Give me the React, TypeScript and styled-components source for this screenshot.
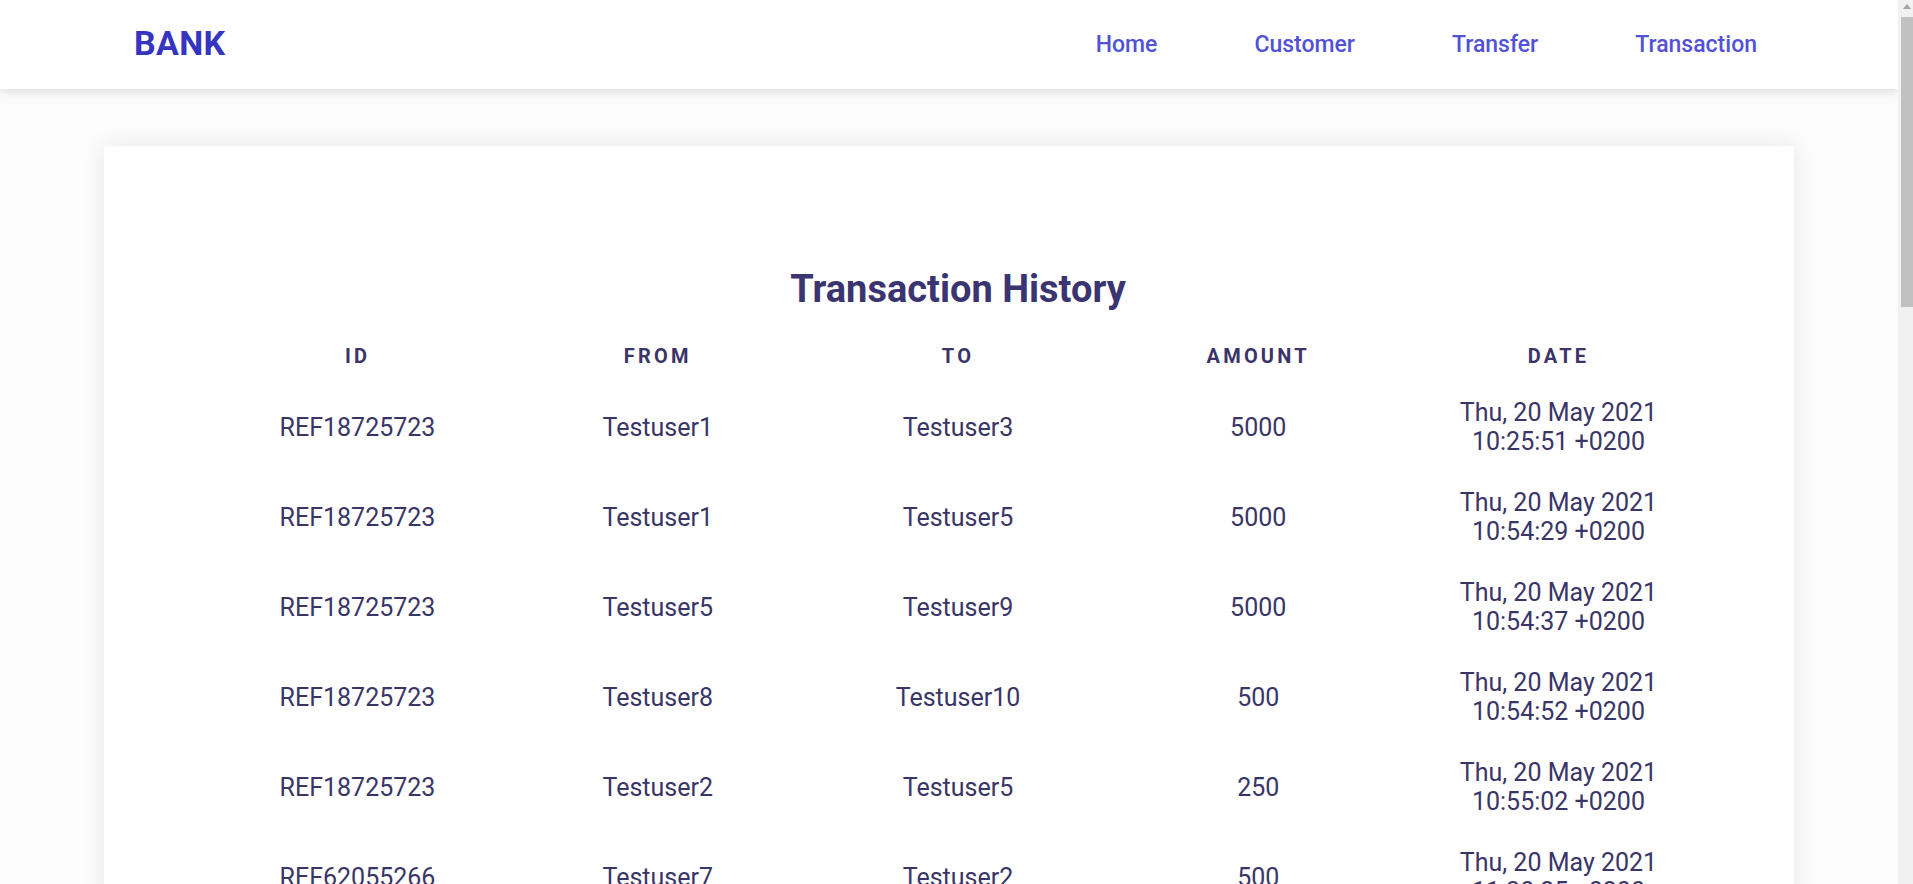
import React from "react";
import styled, { createGlobalStyle } from "styled-components";

const GlobalStyle = createGlobalStyle`
  html, body {
    margin: 0;
    padding: 0;
    background: #fcfcfc;
    font-family: Roboto, "Liberation Sans", Arial, sans-serif;
  }
  * { box-sizing: border-box; }
`;

const Page = styled.div`
  margin-right: 15px;
`;

const ScrollTrack = styled.div`
  position: fixed;
  top: 0;
  right: 0;
  width: 15px;
  height: 100vh;
  background: #f1f1f1;
  display: flex;
  flex-direction: column;
  align-items: flex-end;
  z-index: 10;
`;

const ScrollArrow = styled.div`
  height: 17px;
  width: 100%;
  display: flex;
  justify-content: center;
  padding-top: 4px;
  padding-left: 3px;
`;

const ScrollThumb = styled.div`
  width: 12px;
  height: 290px;
  background: #c1c1c1;
`;

const Header = styled.header`
  height: 89px;
  background: #ffffff;
  display: flex;
  align-items: center;
  justify-content: space-between;
  padding: 0 141px 0 134px;
  box-shadow: 0 3px 10px rgba(0, 0, 0, 0.13);
  position: relative;
  z-index: 2;
`;

const Logo = styled.div`
  font-size: 34px;
  font-weight: 700;
  color: #3535bf;
  letter-spacing: 0.3px;
  margin-top: -3px;
`;

const Nav = styled.nav`
  display: flex;
  align-items: center;
  gap: 97px;
`;

const NavLink = styled.a`
  font-size: 23px;
  font-weight: 500;
  color: #5252d6;
  text-decoration: none;
  cursor: pointer;
`;

const Card = styled.main`
  width: 89%;
  margin: 57px auto 70px;
  background: #ffffff;
  box-shadow: 0 0 22px rgba(0, 0, 0, 0.09);
  padding: 121px 85px 80px 103px;
`;

const Title = styled.h2`
  margin: 0 0 18px;
  font-size: 38px;
  line-height: 45px;
  font-weight: 700;
  color: #3a3470;
  text-align: center;
`;

const Table = styled.table`
  width: 100%;
  border-collapse: collapse;
  table-layout: fixed;
`;

const Th = styled.th`
  font-size: 20px;
  font-weight: 700;
  letter-spacing: 3.2px;
  text-transform: uppercase;
  line-height: 24px;
  padding: 14px 16px;
  color: #3a3468;
  text-align: center;
`;

const Td = styled.td`
  font-size: 25px;
  font-weight: 400;
  line-height: 29px;
  padding: 16px 12px;
  color: #3a3567;
  text-align: center;
  vertical-align: middle;
`;

const DateLine = styled.span`
  display: block;
`;

type Tx = { id: string; from: string; to: string; amount: number; time: string };

const rows: Tx[] = [
  { id: "REF18725723", from: "Testuser1", to: "Testuser3", amount: 5000, time: "10:25:51" },
  { id: "REF18725723", from: "Testuser1", to: "Testuser5", amount: 5000, time: "10:54:29" },
  { id: "REF18725723", from: "Testuser5", to: "Testuser9", amount: 5000, time: "10:54:37" },
  { id: "REF18725723", from: "Testuser8", to: "Testuser10", amount: 500, time: "10:54:52" },
  { id: "REF18725723", from: "Testuser2", to: "Testuser5", amount: 250, time: "10:55:02" },
  { id: "REF62055266", from: "Testuser7", to: "Testuser2", amount: 500, time: "11:30:25" },
  { id: "REF62055266", from: "Testuser3", to: "Testuser6", amount: 1000, time: "11:31:02" },
  { id: "REF62055266", from: "Testuser4", to: "Testuser1", amount: 750, time: "11:31:40" },
  { id: "REF62055266", from: "Testuser9", to: "Testuser8", amount: 300, time: "11:32:15" },
  { id: "REF62055266", from: "Testuser10", to: "Testuser4", amount: 1200, time: "11:33:08" },
  { id: "REF40918352", from: "Testuser6", to: "Testuser7", amount: 450, time: "12:02:11" },
  { id: "REF40918352", from: "Testuser5", to: "Testuser3", amount: 2000, time: "12:03:47" },
  { id: "REF40918352", from: "Testuser2", to: "Testuser9", amount: 150, time: "12:05:20" },
  { id: "REF40918352", from: "Testuser1", to: "Testuser10", amount: 600, time: "12:06:33" },
  { id: "REF40918352", from: "Testuser8", to: "Testuser2", amount: 800, time: "12:08:05" },
  { id: "REF77214590", from: "Testuser3", to: "Testuser1", amount: 350, time: "13:15:42" },
  { id: "REF77214590", from: "Testuser7", to: "Testuser5", amount: 5000, time: "13:16:18" },
  { id: "REF77214590", from: "Testuser9", to: "Testuser6", amount: 100, time: "13:17:59" },
  { id: "REF77214590", from: "Testuser4", to: "Testuser8", amount: 2500, time: "13:19:24" },
  { id: "REF77214590", from: "Testuser10", to: "Testuser3", amount: 400, time: "13:20:51" },
  { id: "REF15530287", from: "Testuser6", to: "Testuser2", amount: 700, time: "14:01:07" },
  { id: "REF15530287", from: "Testuser1", to: "Testuser4", amount: 900, time: "14:02:36" },
  { id: "REF15530287", from: "Testuser5", to: "Testuser7", amount: 1500, time: "14:04:12" },
  { id: "REF15530287", from: "Testuser2", to: "Testuser10", amount: 200, time: "14:05:48" },
  { id: "REF15530287", from: "Testuser8", to: "Testuser9", amount: 3000, time: "14:07:23" },
  { id: "REF93361748", from: "Testuser3", to: "Testuser5", amount: 550, time: "15:10:14" },
  { id: "REF93361748", from: "Testuser7", to: "Testuser1", amount: 1250, time: "15:11:49" },
  { id: "REF93361748", from: "Testuser9", to: "Testuser4", amount: 650, time: "15:13:02" },
  { id: "REF93361748", from: "Testuser10", to: "Testuser6", amount: 850, time: "15:14:37" },
  { id: "REF93361748", from: "Testuser4", to: "Testuser2", amount: 50, time: "15:16:20" },
  { id: "REF28845019", from: "Testuser6", to: "Testuser8", amount: 4000, time: "16:20:33" },
  { id: "REF28845019", from: "Testuser1", to: "Testuser9", amount: 950, time: "16:21:58" },
  { id: "REF28845019", from: "Testuser5", to: "Testuser10", amount: 300, time: "16:23:41" },
  { id: "REF28845019", from: "Testuser2", to: "Testuser7", amount: 1100, time: "16:25:09" },
  { id: "REF28845019", from: "Testuser8", to: "Testuser3", amount: 600, time: "16:26:44" },
  { id: "REF51172036", from: "Testuser3", to: "Testuser4", amount: 750, time: "17:05:12" },
  { id: "REF51172036", from: "Testuser7", to: "Testuser6", amount: 200, time: "17:06:50" },
  { id: "REF51172036", from: "Testuser9", to: "Testuser1", amount: 1800, time: "17:08:27" },
  { id: "REF51172036", from: "Testuser10", to: "Testuser5", amount: 450, time: "17:09:55" },
  { id: "REF51172036", from: "Testuser4", to: "Testuser7", amount: 2200, time: "17:11:31" },
  { id: "REF64409821", from: "Testuser6", to: "Testuser10", amount: 350, time: "18:02:18" },
];

export default function App() {
  return (
    <>
      <GlobalStyle />
      <ScrollTrack aria-hidden="true">
        <ScrollArrow>
          <svg width="8" height="5" viewBox="0 0 8 5">
            <polygon points="4,0 8,5 0,5" fill="#a3a3a3" />
          </svg>
        </ScrollArrow>
        <ScrollThumb />
      </ScrollTrack>
      <Page>
        <Header>
          <Logo>BANK</Logo>
          <Nav>
            <NavLink>Home</NavLink>
            <NavLink>Customer</NavLink>
            <NavLink>Transfer</NavLink>
            <NavLink>Transaction</NavLink>
          </Nav>
        </Header>
        <Card>
          <Title>Transaction History</Title>
          <Table>
            <thead>
              <tr>
                <Th>ID</Th>
                <Th>From</Th>
                <Th>To</Th>
                <Th>Amount</Th>
                <Th>Date</Th>
              </tr>
            </thead>
            <tbody>
              {rows.map((r, i) => (
                <tr key={i}>
                  <Td>{r.id}</Td>
                  <Td>{r.from}</Td>
                  <Td>{r.to}</Td>
                  <Td>{r.amount}</Td>
                  <Td>
                    <DateLine>Thu, 20 May 2021</DateLine>
                    <DateLine>{r.time} +0200</DateLine>
                  </Td>
                </tr>
              ))}
            </tbody>
          </Table>
        </Card>
      </Page>
    </>
  );
}
